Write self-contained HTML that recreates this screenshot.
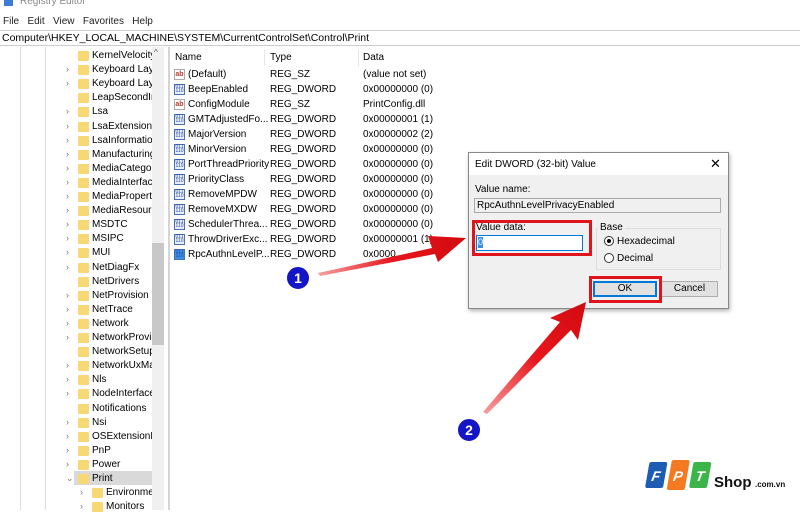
<!DOCTYPE html>
<html><head><meta charset="utf-8"><style>
*{margin:0;padding:0;box-sizing:border-box}
body{width:800px;height:510px;overflow:hidden;background:#fff;font-family:"Liberation Sans",sans-serif;font-size:10px;color:#000;position:relative}
.a{position:absolute;white-space:nowrap}
.fold{position:absolute;width:11px;height:10px;background:#f8d775;border-radius:1px}
.chev{position:absolute;color:#777;font-size:9px}
.ic{position:absolute;width:11px;height:11px;border:1px solid #4a6fb5;background:#e8eef9;font-size:5px;line-height:4px;color:#2748a0;text-align:center}
.ab{position:absolute;width:11px;height:11px;border:1px solid #aaa;background:#fff;color:#c0392b;font-size:7px;line-height:9px;text-align:center;font-weight:bold}
</style></head><body>
<div class="a" style="left:4px;top:-3px;width:9px;height:9px;background:#3a7bd5"></div>
<div class="a" style="left:20px;top:-4px;color:#888;font-size:10px">Registry Editor</div>
<div class="a" style="left:3px;top:16px;font-size:10px;color:#222">File &nbsp;&nbsp;Edit &nbsp;&nbsp;View &nbsp;&nbsp;Favorites &nbsp;&nbsp;Help</div>
<div class="a" style="left:0;top:30px;width:800px;height:16px;border-top:1px solid #ccc;border-bottom:1px solid #ccc"></div>
<div class="a" style="left:2px;top:32px;font-size:10.5px">Computer\HKEY_LOCAL_MACHINE\SYSTEM\CurrentControlSet\Control\Print</div>
<div class="a" style="left:20px;top:47px;height:463px;border-left:1px solid #ddd"></div>
<div class="a" style="left:45px;top:47px;height:463px;border-left:1px solid #ddd"></div>
<div class="a" style="left:152px;top:47px;width:12px;height:463px;background:#f0f0f0"></div>
<div class="a" style="left:152px;top:243px;width:12px;height:102px;background:#c8c8c8"></div>
<div class="a" style="left:154px;top:48px;font-size:8px;color:#555">^</div>
<div class="a" style="left:168px;top:47px;height:463px;border-left:2px solid #d5d5d5"></div>
<div class="a" style="left:74px;top:471px;width:78px;height:14px;background:#d9d9d9"></div>
<div id="tree"></div>
<div id="list"></div>
<div class="a" style="left:264px;top:50px;height:16px;border-left:1px solid #e5e5e5"></div>
<div class="a" style="left:358px;top:50px;height:16px;border-left:1px solid #e5e5e5"></div>
<div class="a" style="left:175px;top:52px">Name</div>
<div class="a" style="left:270px;top:52px">Type</div>
<div class="a" style="left:363px;top:52px">Data</div>

<div class="a" style="left:468px;top:152px;width:261px;height:157px;background:#f0f0f0;border:1px solid #888;box-shadow:1px 2px 4px rgba(0,0,0,.3)"></div>
<div class="a" style="left:469px;top:153px;width:259px;height:22px;background:#fff"></div>
<div class="a" style="left:475px;top:159px;font-size:10px">Edit DWORD (32-bit) Value</div>
<div class="a" style="left:710px;top:156px;font-size:13px">✕</div>
<div class="a" style="left:475px;top:184px">Value name:</div>
<div class="a" style="left:474px;top:198px;width:247px;height:15px;border:1px solid #aaa;background:#f0f0f0"></div>
<div class="a" style="left:477px;top:200px">RpcAuthnLevelPrivacyEnabled</div>
<div class="a" style="left:596px;top:228px;width:125px;height:42px;border:1px solid #ddd"></div>
<div class="a" style="left:598px;top:222px;background:#f0f0f0;padding:0 2px">Base</div>
<div class="a" style="left:604px;top:236px;width:10px;height:10px;border:1px solid #333;border-radius:50%;background:#fff"></div>
<div class="a" style="left:607px;top:239px;width:4px;height:4px;border-radius:50%;background:#000"></div>
<div class="a" style="left:617px;top:236px">Hexadecimal</div>
<div class="a" style="left:604px;top:253px;width:10px;height:10px;border:1px solid #333;border-radius:50%;background:#fff"></div>
<div class="a" style="left:617px;top:253px">Decimal</div>
<div class="a" style="left:661px;top:281px;width:57px;height:16px;border:1px solid #adadad;background:#e1e1e1;text-align:center;line-height:14px">Cancel</div>
<div class="a" style="left:593px;top:281px;width:64px;height:16px;border:2px solid #0078d7;background:#e1e1e1;text-align:center;line-height:12px">OK</div>
<div class="a" style="left:476px;top:235px;width:107px;height:16px;border:1px solid #0078d7;background:#fff"></div>
<div class="a" style="left:478px;top:237px;width:5px;height:11px;background:#3a8ee6;color:#fff;font-size:9px;line-height:11px">0</div>
<div class="a" style="left:476px;top:222px">Value data:</div>
<div class="a" style="left:472px;top:220px;width:120px;height:36px;border:3px solid #e0141c"></div>
<div class="a" style="left:589px;top:276px;width:73px;height:27px;border:3px solid #e0141c"></div>

<svg class="a" style="left:0;top:0" width="800" height="510">
<defs><linearGradient id="g" x1="0" x2="1"><stop offset="0" stop-color="#f7a0a0"/><stop offset=".5" stop-color="#e8161c"/><stop offset="1" stop-color="#d10a10"/></linearGradient>
<linearGradient id="g2" x1="0" y1="1" x2="1" y2="0"><stop offset="0" stop-color="#f7a0a0"/><stop offset=".5" stop-color="#e8161c"/><stop offset="1" stop-color="#d10a10"/></linearGradient></defs>
<path d="M318 273 L432 248 L428 236 L466 238 L438 262 L435 254 L320 276 Z" fill="url(#g)"/>
<path d="M483 412 L560 322 L550 318 L586 302 L578 340 L571 330 L487 414 Z" fill="url(#g2)"/>
<circle cx="298" cy="278" r="12" fill="#1515c8" stroke="#fff" stroke-width="2"/>
<text x="298" y="283" font-family="Liberation Sans" font-weight="bold" font-size="14" fill="#fff" text-anchor="middle">1</text>
<circle cx="469" cy="430" r="12" fill="#1515c8" stroke="#fff" stroke-width="2"/>
<text x="469" y="435" font-family="Liberation Sans" font-weight="bold" font-size="14" fill="#fff" text-anchor="middle">2</text>
<g transform="skewX(-10)">
<rect x="731" y="462" width="18" height="26" rx="2" fill="#1e5cb4"/>
<rect x="753" y="460" width="18" height="30" rx="2" fill="#f47920"/>
<rect x="775" y="462" width="18" height="26" rx="2" fill="#3bb44a"/>
<text x="740" y="481" font-family="Liberation Sans" font-weight="bold" font-style="italic" font-size="14" fill="#fff" text-anchor="middle">F</text>
<text x="762" y="481" font-family="Liberation Sans" font-weight="bold" font-style="italic" font-size="14" fill="#fff" text-anchor="middle">P</text>
<text x="784" y="481" font-family="Liberation Sans" font-weight="bold" font-style="italic" font-size="14" fill="#fff" text-anchor="middle">T</text>
</g>
<text x="714" y="487" font-family="Liberation Sans" font-weight="bold" font-size="15" fill="#111">Shop</text>
<text x="755" y="487" font-family="Liberation Sans" font-weight="bold" font-size="8" fill="#111">.com.vn</text>
</svg>
<script>
var t=["KernelVelocity","Keyboard Layc","Keyboard Layc","LeapSecondIn","Lsa","LsaExtensionC","LsaInformatio","Manufacturing","MediaCategor","MediaInterface","MediaProperti","MediaResourc","MSDTC","MSIPC","MUI","NetDiagFx","NetDrivers","NetProvision","NetTrace","Network","NetworkProvic","NetworkSetup","NetworkUxMa","Nls","NodeInterface","Notifications","Nsi","OSExtensionD","PnP","Power","Print","Environmen","Monitors"];
var nc={0:1,3:1,16:1,21:1,25:1},h="";
t.forEach(function(s,i){var y=49+i*14.1,x=i>30?92:78;
h+='<div class="fold" style="left:'+x+'px;top:'+(y+2)+'px"></div>';
if(!nc[i])h+='<div class="chev" style="left:'+(x-12)+'px;top:'+(y+1)+'px">'+(i==30?'⌄':'›')+'</div>';
h+='<div class="a" style="left:'+(x+14)+'px;top:'+(y+1)+'px;width:'+(152-x-14)+'px;overflow:hidden">'+s+'</div>';});
document.getElementById('tree').innerHTML=h;
var L=[["(Default)","REG_SZ","(value not set)",1],["BeepEnabled","REG_DWORD","0x00000000 (0)"],["ConfigModule","REG_SZ","PrintConfig.dll",1],["GMTAdjustedFo...","REG_DWORD","0x00000001 (1)"],["MajorVersion","REG_DWORD","0x00000002 (2)"],["MinorVersion","REG_DWORD","0x00000000 (0)"],["PortThreadPriority","REG_DWORD","0x00000000 (0)"],["PriorityClass","REG_DWORD","0x00000000 (0)"],["RemoveMPDW","REG_DWORD","0x00000000 (0)"],["RemoveMXDW","REG_DWORD","0x00000000 (0)"],["SchedulerThrea...","REG_DWORD","0x00000000 (0)"],["ThrowDriverExc...","REG_DWORD","0x00000001 (1)"],["RpcAuthnLevelP...","REG_DWORD","0x0000"]];
h="";L.forEach(function(r,i){var y=68+i*15;
h+=r[3]?'<div class="ab" style="left:174px;top:'+(y+1)+'px">ab</div>':'<div class="ic" style="left:174px;top:'+(y+1)+'px'+(i==12?';background:#3a8ee6':'')+'">011<br>110</div>';
h+='<div class="a" style="left:188px;top:'+(y+1)+'px">'+r[0]+'</div><div class="a" style="left:270px;top:'+(y+1)+'px">'+r[1]+'</div><div class="a" style="left:363px;top:'+(y+1)+'px">'+r[2]+'</div>';});
document.getElementById('list').innerHTML=h;
</script>
</body></html>
